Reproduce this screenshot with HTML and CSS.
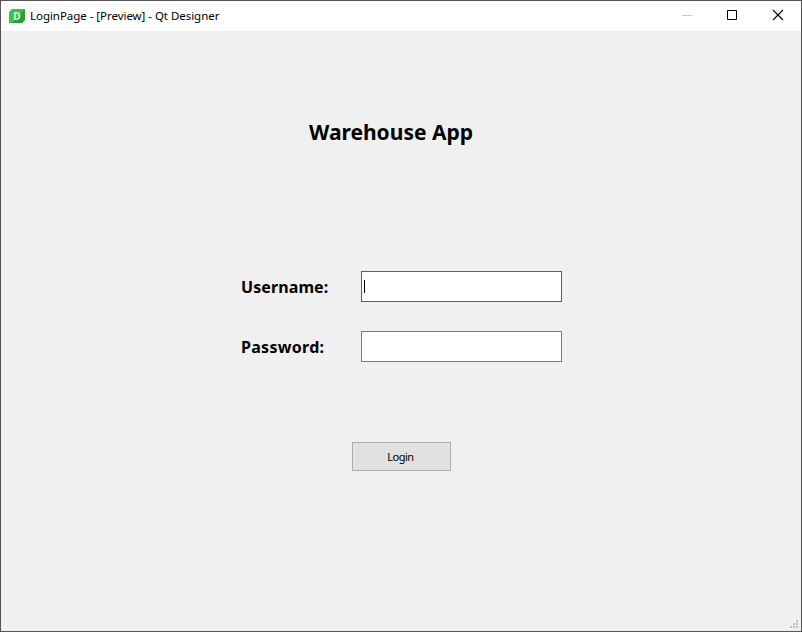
FILE: index.html
```html
<!DOCTYPE html>
<html lang="en">
<head>
<meta charset="utf-8">
<title>LoginPage - [Preview] - Qt Designer</title>
<link rel="stylesheet" href="styles.css">
</head>
<body>
<div class="window">
  <header class="titlebar">
    <svg class="app-icon" width="16" height="14" viewBox="0 0 16 14">
      <path d="M3 0H16V11L13 14H0V3Z" fill="#3cc04b"/>
      <path d="M16 0V11L13 14H3Z" fill="#27a137"/>
      <text class="app-letter" x="8" y="10.8" text-anchor="middle">D</text>
    </svg>
    <span class="caption">LoginPage - [Preview] - Qt Designer</span>
    <div class="controls">
      <svg width="46" height="30" viewBox="0 0 46 30"><path d="M18 14.5H28" stroke="#c9c9c9"/></svg>
      <svg width="46" height="30" viewBox="0 0 46 30"><path d="M18.5 9.5H27.5V18.5H18.5Z" fill="none" stroke="#000"/></svg>
      <svg width="46" height="30" viewBox="0 0 46 30"><path d="M18 9L28 19M28 9L18 19" stroke="#000" stroke-width="1.1"/></svg>
    </div>
  </header>
  <main class="page">
    <h1 class="heading">Warehouse App</h1>
    <form class="login">
      <label class="label username">Username:</label>
      <div class="field focused"><span class="caret"></span></div>
      <label class="label password">Password:</label>
      <div class="field"></div>
    </form>
    <button class="submit" type="button">Login</button>
  </main>
  <svg class="grip" width="8" height="8" viewBox="0 0 8 8" fill="#bfbfbf">
    <path d="M6 0h2v2h-2zM3 3h2v2h-2zM6 3h2v2h-2zM0 6h2v2h-2zM3 6h2v2h-2zM6 6h2v2h-2z"/>
  </svg>
</div>
</body>
</html>
```
FILE: styles.css
```css
* { box-sizing: border-box; }
body { margin: 0; overflow: hidden; }
.window {
  position: relative;
  width: 802px;
  height: 632px;
  border: 1px solid #555;
  background: #f0f0f0;
  color: #000;
  font-family: "Noto Sans", sans-serif;
}
.titlebar {
  display: flex;
  align-items: center;
  height: 30px;
  padding-left: 8px;
  background: #fff;
}
.app-icon { margin-right: 5px; }
.app-letter { font: bold 10px "Noto Sans", sans-serif; fill: #d5f7d8; }
.caption {
  font-size: 11.5px;
  letter-spacing: -0.04px;
  line-height: 30px;
  white-space: nowrap;
}
.controls { display: flex; margin-left: auto; }
.controls svg { display: block; }
.controls svg:first-child { margin-right: -1px; }
.page { display: flex; flex-direction: column; height: 600px; }
.heading {
  margin: 86px 0 0 308px;
  font-size: 21px;
  font-weight: 700;
  line-height: 30px;
  white-space: nowrap;
}
.login {
  display: grid;
  grid-template-columns: 120px 201px;
  grid-auto-rows: 31px;
  row-gap: 29px;
  margin: 124px 0 0 240px;
}
.label { font-size: 16px; font-weight: 700; line-height: 33px; white-space: nowrap; }
.username { letter-spacing: 0.1px; }
.password { letter-spacing: 0.3px; }
.field { display: flex; align-items: center; padding-left: 2px; border: 1px solid #7a7a7a; background: #fff; }
.field.focused { border: 1px solid #0d7ab5; }
.caret { width: 1px; height: 13px; background: #000; }
.submit {
  width: 99px;
  height: 29px;
  margin: 80px 0 0 351px;
  padding: 0 2px 0 0;
  border: 1px solid #adadad;
  border-radius: 0;
  background: #e1e1e1;
  color: #000;
  font: 11px/27px "Noto Sans", sans-serif;
  letter-spacing: -0.5px;
}
.grip { position: absolute; right: 3px; bottom: 3px; }
```
